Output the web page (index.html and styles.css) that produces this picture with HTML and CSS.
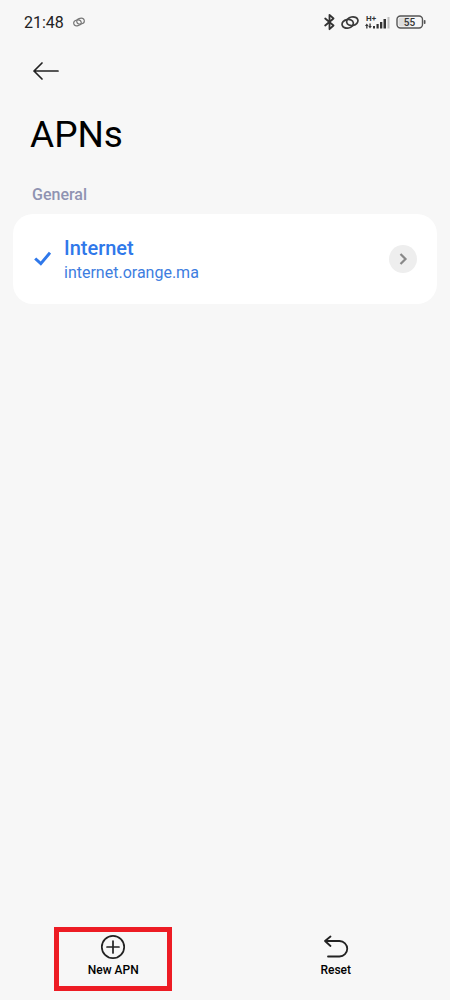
FILE: index.html
```html
<!DOCTYPE html>
<html lang="en">
<head>
<meta charset="utf-8">
<meta name="viewport" content="width=device-width, initial-scale=1">
<title>APNs</title>
<link rel="stylesheet" href="styles.css">
</head>
<body>
<div class="status-bar">
  <div class="status-left">
    <span class="clock">21:48</span>
    <svg width="12" height="10" viewBox="0 0 18 15" fill="none" stroke="#777" stroke-width="1.700" aria-hidden="true">
      <ellipse cx="6.700" cy="8.800" rx="5.700" ry="4.300" transform="rotate(-12 6.700 8.800)"/>
      <ellipse cx="11.300" cy="6.200" rx="5.700" ry="4.300" transform="rotate(-12 11.300 6.200)"/>
    </svg>
  </div>
  <div class="status-right">
    <svg width="11" height="18" viewBox="0 0 11 18" fill="none" stroke="#333" stroke-width="1.800" stroke-linejoin="round" stroke-linecap="round" aria-hidden="true">
      <path d="M1.200 5.500 9.500 12.500 5.500 16.200V1.800L9.500 5.500 1.200 12.500"/>
    </svg>
    <svg width="18" height="15" viewBox="0 0 18 15" fill="none" stroke="#3a3a3a" stroke-width="1.700" aria-hidden="true">
      <ellipse cx="6.700" cy="8.800" rx="5.700" ry="4.300" transform="rotate(-12 6.700 8.800)"/>
      <ellipse cx="11.300" cy="6.200" rx="5.700" ry="4.300" transform="rotate(-12 11.300 6.200)"/>
    </svg>
    <svg width="25" height="16" viewBox="0 0 25 16" aria-hidden="true">
      <text class="network-type" x="1" y="7">H+</text>
      <g fill="#333">
        <path d="M0 12 1.800 9.500 3.600 12H2.500v2.500H1.200V12z"/>
        <path d="M3.300 12H4.400V9.500H5.700V12H6.800L5 14.500z"/>
        <rect x="8" y="12" width="2" height="2.500"/>
        <rect x="11.500" y="10" width="2.200" height="4.500"/>
        <rect x="15" y="8" width="2.300" height="6.500"/>
        <rect x="18.500" y="5" width="2.500" height="9.500"/>
      </g>
      <rect x="22.500" y="3" width="2" height="11.500" fill="#bdbdbd"/>
    </svg>
    <svg width="30" height="14" viewBox="0 0 30 14" aria-hidden="true">
      <rect x="2.500" y="2.500" width="12" height="9" rx="2" fill="#dcdcdc"/>
      <rect x="1" y="1" width="25.500" height="12" rx="3.500" fill="none" stroke="#555" stroke-width="1.400"/>
      <rect x="27.800" y="5" width="1.700" height="4" rx=".8" fill="#555"/>
      <text class="battery-level" x="13.500" y="10.500" text-anchor="middle">55</text>
    </svg>
  </div>
</div>

<header class="header">
  <button class="back" type="button" aria-label="Back">
    <svg width="28" height="20" viewBox="0 0 28 20" fill="none" stroke="#222" stroke-width="1.700" stroke-linecap="round" stroke-linejoin="round" aria-hidden="true">
      <path d="M26 10H2M10 2 2 10l8 8"/>
    </svg>
  </button>
  <h1 class="title">APNs</h1>
</header>

<main class="content">
  <h2 class="section-title">General</h2>
  <div class="card">
    <svg width="18" height="16" viewBox="0 0 18 16" fill="none" stroke="#2f78ea" stroke-width="3" aria-hidden="true">
      <path d="M2.200 7.500 7.800 12.700 17 1.700"/>
    </svg>
    <div class="apn">
      <span class="apn-name">Internet</span>
      <span class="apn-host">internet.orange.ma</span>
    </div>
    <button class="details" type="button" aria-label="Internet details">
      <svg width="10" height="14" viewBox="0 0 10 14" fill="none" stroke="#888" stroke-width="2.200" aria-hidden="true">
        <path d="M2.500 2l5 5-5 5"/>
      </svg>
    </button>
  </div>
</main>

<footer class="toolbar">
  <button class="action action-highlighted" type="button">
    <svg width="26" height="26" viewBox="0 0 26 26" fill="none" stroke="#222" stroke-width="1.700" stroke-linecap="round" aria-hidden="true">
      <circle cx="13" cy="13" r="11.200"/>
      <path d="M13 7v12M7 13h12"/>
    </svg>
    <span>New APN</span>
  </button>
  <button class="action" type="button">
    <svg width="26" height="26" viewBox="0 0 26 26" fill="none" stroke="#222" stroke-width="1.800" stroke-linecap="round" stroke-linejoin="round" aria-hidden="true">
      <path d="M7.500 2.500 2 7l5.500 5M2 7h14.500a7.500 7.500 0 0 1 0 15.500H5"/>
    </svg>
    <span>Reset</span>
  </button>
</footer>
</body>
</html>
```
FILE: styles.css
```css
* {
  box-sizing: border-box;
}

body {
  display: flex;
  flex-direction: column;
  min-height: 100vh;
  margin: 0;
  background: #f7f7f7;
  color: #000;
  font-family: Roboto, "Liberation Sans", sans-serif;
}

button {
  padding: 0;
  border: 0;
  background: none;
  color: inherit;
  font: inherit;
  cursor: pointer;
}

svg {
  display: block;
  flex: none;
}

.status-bar {
  display: flex;
  align-items: center;
  justify-content: space-between;
  height: 44px;
  padding: 0 24px;
}

.status-left {
  display: flex;
  align-items: center;
  gap: 9px;
}

.clock {
  padding-top: 2px;
  color: #222;
  font-size: 16px;
  line-height: 20px;
}

.status-right {
  display: flex;
  align-items: center;
  gap: 6px;
}

.network-type {
  fill: #333;
  font-size: 8px;
  font-weight: 700;
}

.battery-level {
  fill: #333;
  font-size: 10px;
  font-weight: 500;
}

.header {
  padding: 15px 30px 0;
}

.back {
  display: block;
  padding: 2px;
}

.title {
  margin: 30px 0 0;
  font-size: 37px;
  font-weight: 400;
  line-height: 44px;
}

.content {
  flex: 1;
  padding: 28px 13px 0;
}

.section-title {
  margin: 0 19px 9px;
  color: #8f93b2;
  font-size: 16px;
  font-weight: 500;
  line-height: 20px;
}

.card {
  display: flex;
  align-items: center;
  min-height: 90px;
  padding: 20px;
  border-radius: 20px;
  background: #fff;
}

.apn {
  display: flex;
  flex: 1;
  flex-direction: column;
  gap: 3px;
  margin-left: 13px;
  color: #3d7de0;
}

.apn-name {
  color: #2f78ea;
  font-size: 20px;
  font-weight: 500;
  line-height: 24px;
}

.apn-host {
  font-size: 16px;
  line-height: 20px;
}

.details {
  display: grid;
  place-items: center;
  width: 28px;
  height: 28px;
  border-radius: 50%;
  background: #eee;
}

.toolbar {
  display: grid;
  grid-template-columns: 1fr 1fr;
  justify-items: center;
  padding: 0 3px 9px 2px;
}

.action {
  display: flex;
  flex-direction: column;
  align-items: center;
  gap: 2px;
  width: 118px;
  height: 64px;
  padding-top: 2px;
  border: 5px solid transparent;
  font-size: 12px;
  font-weight: 500;
  line-height: 16px;
}

.action-highlighted {
  border-color: #ed1c24;
}
```
